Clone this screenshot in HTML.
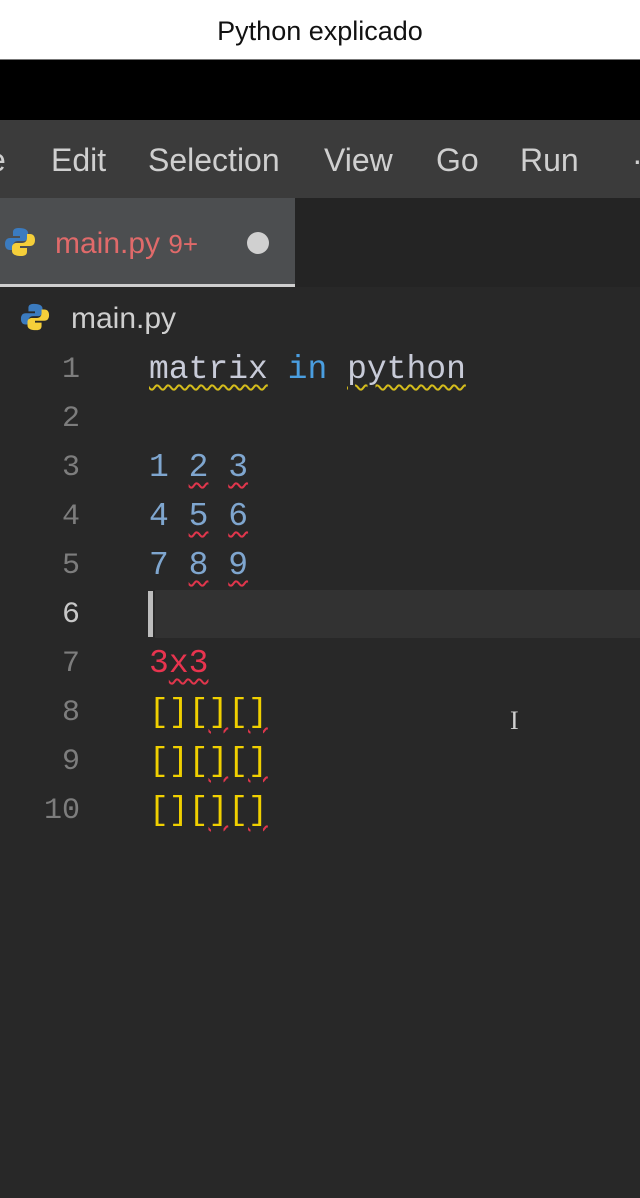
<!DOCTYPE html>
<html><head><meta charset="utf-8"><style>
*{margin:0;padding:0;box-sizing:border-box}
body{width:640px;height:1198px;background:#282828;position:relative;overflow:hidden;font-family:"Liberation Sans",sans-serif}
.a{position:absolute;white-space:pre}
.m{font-family:"Liberation Mono",monospace;font-size:33px}
.ln{position:absolute;left:0;width:80px;text-align:right;color:#7d7d7d;font-family:"Liberation Mono",monospace;font-size:30px}
.sq{text-decoration:underline wavy #e0364c;text-underline-offset:6px;text-decoration-thickness:2px}
.sy{text-decoration:underline wavy #d4bc1c;text-underline-offset:6px;text-decoration-thickness:2px}
</style></head><body>
<div class="a" style="left:0;top:0;width:640px;height:60px;background:#fff;border-bottom:1px solid #777"></div>
<div class="a" style="left:0;top:16px;width:640px;text-align:center;font-size:27px;color:#111">Python explicado</div>
<div class="a" style="left:0;top:60px;width:640px;height:60px;background:#000"></div>
<div class="a" style="left:0;top:120px;width:640px;height:78px;background:#3b3b3b"></div>
<div class="a" style="left:-12px;top:142px;font-size:32px;color:#cfcfcf">e</div>
<div class="a" style="left:51px;top:142px;font-size:32px;color:#cfcfcf">Edit</div>
<div class="a" style="left:148px;top:142px;font-size:32px;color:#cfcfcf">Selection</div>
<div class="a" style="left:324px;top:142px;font-size:32px;color:#cfcfcf">View</div>
<div class="a" style="left:436px;top:142px;font-size:32px;color:#cfcfcf">Go</div>
<div class="a" style="left:520px;top:142px;font-size:32px;color:#cfcfcf">Run</div>
<div class="a" style="left:632px;top:142px;font-size:32px;color:#cfcfcf">·</div>
<div class="a" style="left:0;top:198px;width:640px;height:89px;background:#242424"></div>
<div class="a" style="left:0;top:198px;width:295px;height:89px;background:#4c4e50;border-bottom:3px solid #cfcfcf"></div>
<svg class="a" style="left:4px;top:226px" width="32" height="32" viewBox="0 0 32 32"><path d="M15 2c-6 0-6 3-6 5v3h7v2H6c-3 0-5 2-5 6s2 6 5 6h3v-4c0-3 2-5 5-5h6c2 0 4-2 4-4V7c0-3-3-5-9-5z" fill="#3b7bbf"/><path d="M17 30c6 0 6-3 6-5v-3h-7v-2h10c3 0 5-2 5-6s-2-6-5-6h-3v4c0 3-2 5-5 5h-6c-2 0-4 2-4 4v4c0 3 3 5 9 5z" fill="#f5cf3a"/></svg>
<div class="a" style="left:55px;top:227px;font-size:30px;color:#e06a6a">main.py <span style="font-size:26px">9+</span></div>
<div class="a" style="left:247px;top:232px;width:22px;height:22px;border-radius:50%;background:#d0d0d0"></div>
<svg class="a" style="left:20px;top:302px" width="30" height="30" viewBox="0 0 32 32"><path d="M15 2c-6 0-6 3-6 5v3h7v2H6c-3 0-5 2-5 6s2 6 5 6h3v-4c0-3 2-5 5-5h6c2 0 4-2 4-4V7c0-3-3-5-9-5z" fill="#3b7bbf"/><path d="M17 30c6 0 6-3 6-5v-3h-7v-2h10c3 0 5-2 5-6s-2-6-5-6h-3v4c0 3-2 5-5 5h-6c-2 0-4 2-4 4v4c0 3 3 5 9 5z" fill="#f5cf3a"/></svg>
<div class="a" style="left:71px;top:302px;font-size:30px;color:#cfcfcf">main.py</div>
<div class="a" style="left:155px;top:590px;width:485px;height:48px;background:#323232"></div>
<div class="a" style="left:148px;top:591px;width:5px;height:46px;background:#bdbdbd"></div>
<div class="ln" style="top:353px">1</div>
<div class="ln" style="top:402px">2</div>
<div class="ln" style="top:451px">3</div>
<div class="ln" style="top:500px">4</div>
<div class="ln" style="top:549px">5</div>
<div class="ln" style="top:598px;color:#c8c8c8">6</div>
<div class="ln" style="top:647px">7</div>
<div class="ln" style="top:696px">8</div>
<div class="ln" style="top:745px">9</div>
<div class="ln" style="top:794px">10</div>
<div class="a m" style="left:149px;top:351px;color:#c8cbd8"><span class="sy">matrix</span> <span style="color:#4a9ee0">in</span> <span class="sy">python</span></div>
<div class="a m" style="left:149px;top:449px;color:#7fa6cf">1 <span class="sq">2</span> <span class="sq">3</span></div>
<div class="a m" style="left:149px;top:498px;color:#7fa6cf">4 <span class="sq">5</span> <span class="sq">6</span></div>
<div class="a m" style="left:149px;top:547px;color:#7fa6cf">7 <span class="sq">8</span> <span class="sq">9</span></div>
<div class="a m" style="left:149px;top:645px;color:#e8344f">3<span class="sq">x3</span></div>
<div class="a m" style="left:149px;top:694px;color:#f0d000">[][<span class="sq">]</span>[<span class="sq">]</span></div>
<div class="a m" style="left:149px;top:743px;color:#f0d000">[][<span class="sq">]</span>[<span class="sq">]</span></div>
<div class="a m" style="left:149px;top:792px;color:#f0d000">[][<span class="sq">]</span>[<span class="sq">]</span></div>
<div class="a" style="left:510px;top:706px;font-family:'Liberation Serif',serif;font-size:26px;color:#cfcfcf">I</div>
</body></html>
